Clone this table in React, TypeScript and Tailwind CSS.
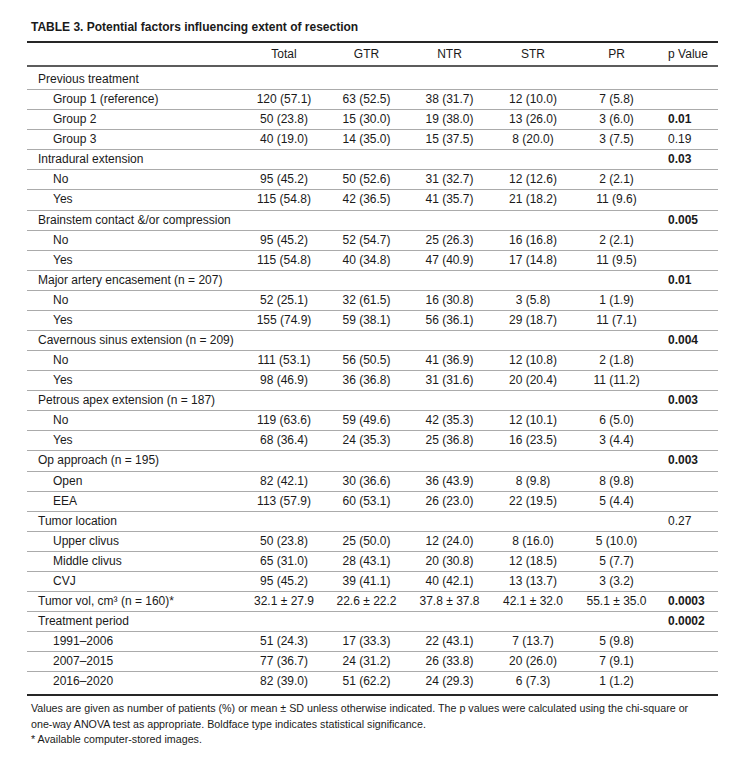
type Row = {
  label: string
  sub?: boolean
  vals?: string[]
  p?: string
  bold?: boolean
}

const rows: Row[] = [
  { label: 'Previous treatment' },
  { label: 'Group 1 (reference)', sub: true, vals: ['120 (57.1)', '63 (52.5)', '38 (31.7)', '12 (10.0)', '7 (5.8)'] },
  { label: 'Group 2', sub: true, vals: ['50 (23.8)', '15 (30.0)', '19 (38.0)', '13 (26.0)', '3 (6.0)'], p: '0.01', bold: true },
  { label: 'Group 3', sub: true, vals: ['40 (19.0)', '14 (35.0)', '15 (37.5)', '8 (20.0)', '3 (7.5)'], p: '0.19' },
  { label: 'Intradural extension', p: '0.03', bold: true },
  { label: 'No', sub: true, vals: ['95 (45.2)', '50 (52.6)', '31 (32.7)', '12 (12.6)', '2 (2.1)'] },
  { label: 'Yes', sub: true, vals: ['115 (54.8)', '42 (36.5)', '41 (35.7)', '21 (18.2)', '11 (9.6)'] },
  { label: 'Brainstem contact &/or compression', p: '0.005', bold: true },
  { label: 'No', sub: true, vals: ['95 (45.2)', '52 (54.7)', '25 (26.3)', '16 (16.8)', '2 (2.1)'] },
  { label: 'Yes', sub: true, vals: ['115 (54.8)', '40 (34.8)', '47 (40.9)', '17 (14.8)', '11 (9.5)'] },
  { label: 'Major artery encasement (n = 207)', p: '0.01', bold: true },
  { label: 'No', sub: true, vals: ['52 (25.1)', '32 (61.5)', '16 (30.8)', '3 (5.8)', '1 (1.9)'] },
  { label: 'Yes', sub: true, vals: ['155 (74.9)', '59 (38.1)', '56 (36.1)', '29 (18.7)', '11 (7.1)'] },
  { label: 'Cavernous sinus extension (n = 209)', p: '0.004', bold: true },
  { label: 'No', sub: true, vals: ['111 (53.1)', '56 (50.5)', '41 (36.9)', '12 (10.8)', '2 (1.8)'] },
  { label: 'Yes', sub: true, vals: ['98 (46.9)', '36 (36.8)', '31 (31.6)', '20 (20.4)', '11 (11.2)'] },
  { label: 'Petrous apex extension (n = 187)', p: '0.003', bold: true },
  { label: 'No', sub: true, vals: ['119 (63.6)', '59 (49.6)', '42 (35.3)', '12 (10.1)', '6 (5.0)'] },
  { label: 'Yes', sub: true, vals: ['68 (36.4)', '24 (35.3)', '25 (36.8)', '16 (23.5)', '3 (4.4)'] },
  { label: 'Op approach (n = 195)', p: '0.003', bold: true },
  { label: 'Open', sub: true, vals: ['82 (42.1)', '30 (36.6)', '36 (43.9)', '8 (9.8)', '8 (9.8)'] },
  { label: 'EEA', sub: true, vals: ['113 (57.9)', '60 (53.1)', '26 (23.0)', '22 (19.5)', '5 (4.4)'] },
  { label: 'Tumor location', p: '0.27' },
  { label: 'Upper clivus', sub: true, vals: ['50 (23.8)', '25 (50.0)', '12 (24.0)', '8 (16.0)', '5 (10.0)'] },
  { label: 'Middle clivus', sub: true, vals: ['65 (31.0)', '28 (43.1)', '20 (30.8)', '12 (18.5)', '5 (7.7)'] },
  { label: 'CVJ', sub: true, vals: ['95 (45.2)', '39 (41.1)', '40 (42.1)', '13 (13.7)', '3 (3.2)'] },
  { label: 'Tumor vol, cm³ (n = 160)*', vals: ['32.1 ± 27.9', '22.6 ± 22.2', '37.8 ± 37.8', '42.1 ± 32.0', '55.1 ± 35.0'], p: '0.0003', bold: true },
  { label: 'Treatment period', p: '0.0002', bold: true },
  { label: '1991–2006', sub: true, vals: ['51 (24.3)', '17 (33.3)', '22 (43.1)', '7 (13.7)', '5 (9.8)'] },
  { label: '2007–2015', sub: true, vals: ['77 (36.7)', '24 (31.2)', '26 (33.8)', '20 (26.0)', '7 (9.1)'] },
  { label: '2016–2020', sub: true, vals: ['82 (39.0)', '51 (62.2)', '24 (29.3)', '6 (7.3)', '1 (1.2)'] },
]

const cols = 'grid grid-cols-[216px_82px_83px_83px_84px_83px_60px] items-center'
const heads = ['Total', 'GTR', 'NTR', 'STR', 'PR']

export default function App() {
  return (
    <div className="min-h-[757px] w-[751px] bg-white px-[27px] pt-[19px] font-['Liberation_Sans',Arial,sans-serif] text-[12px] text-[#1a1a1a]">
      <div className="mb-[6px] pl-[4px] text-[12px] font-bold leading-[16px]">
        TABLE 3. Potential factors influencing extent of resection
      </div>

      <div className="w-[691px] border-y-2 border-[#262626]">
        <div className={`${cols} h-[24px] border-b-2 border-[#5c5c5c]`}>
          <div />
          {heads.map((h) => (
            <div key={h} className="text-center">{h}</div>
          ))}
          <div className="text-center">p Value</div>
        </div>

        {rows.map((r, i) => {
          const first = i === 0
          const last = i === rows.length - 1
          return (
            <div
              key={i}
              className={`${cols} leading-[19.08px] ${first ? 'pt-[3px]' : ''} ${last ? 'pb-[3px]' : 'border-b border-[#ababab]'}`}
            >
              <div className={r.sub ? 'pl-[26px]' : 'pl-[11px]'}>{r.label}</div>
              {(r.vals ?? ['', '', '', '', '']).map((v, j) => (
                <div key={j} className="text-center whitespace-nowrap">{v}</div>
              ))}
              <div className={`pl-[10px] ${r.bold ? 'font-bold' : ''}`}>{r.p}</div>
            </div>
          )
        })}
      </div>

      <div className="mt-[5px] pl-[4px] text-[10.7px] leading-[15.5px]">
        Values are given as number of patients (%) or mean ± SD unless otherwise indicated. The p values were calculated using the chi-square or
        <br />
        one-way ANOVA test as appropriate. Boldface type indicates statistical significance.
        <br />
        * Available computer-stored images.
      </div>
    </div>
  )
}
